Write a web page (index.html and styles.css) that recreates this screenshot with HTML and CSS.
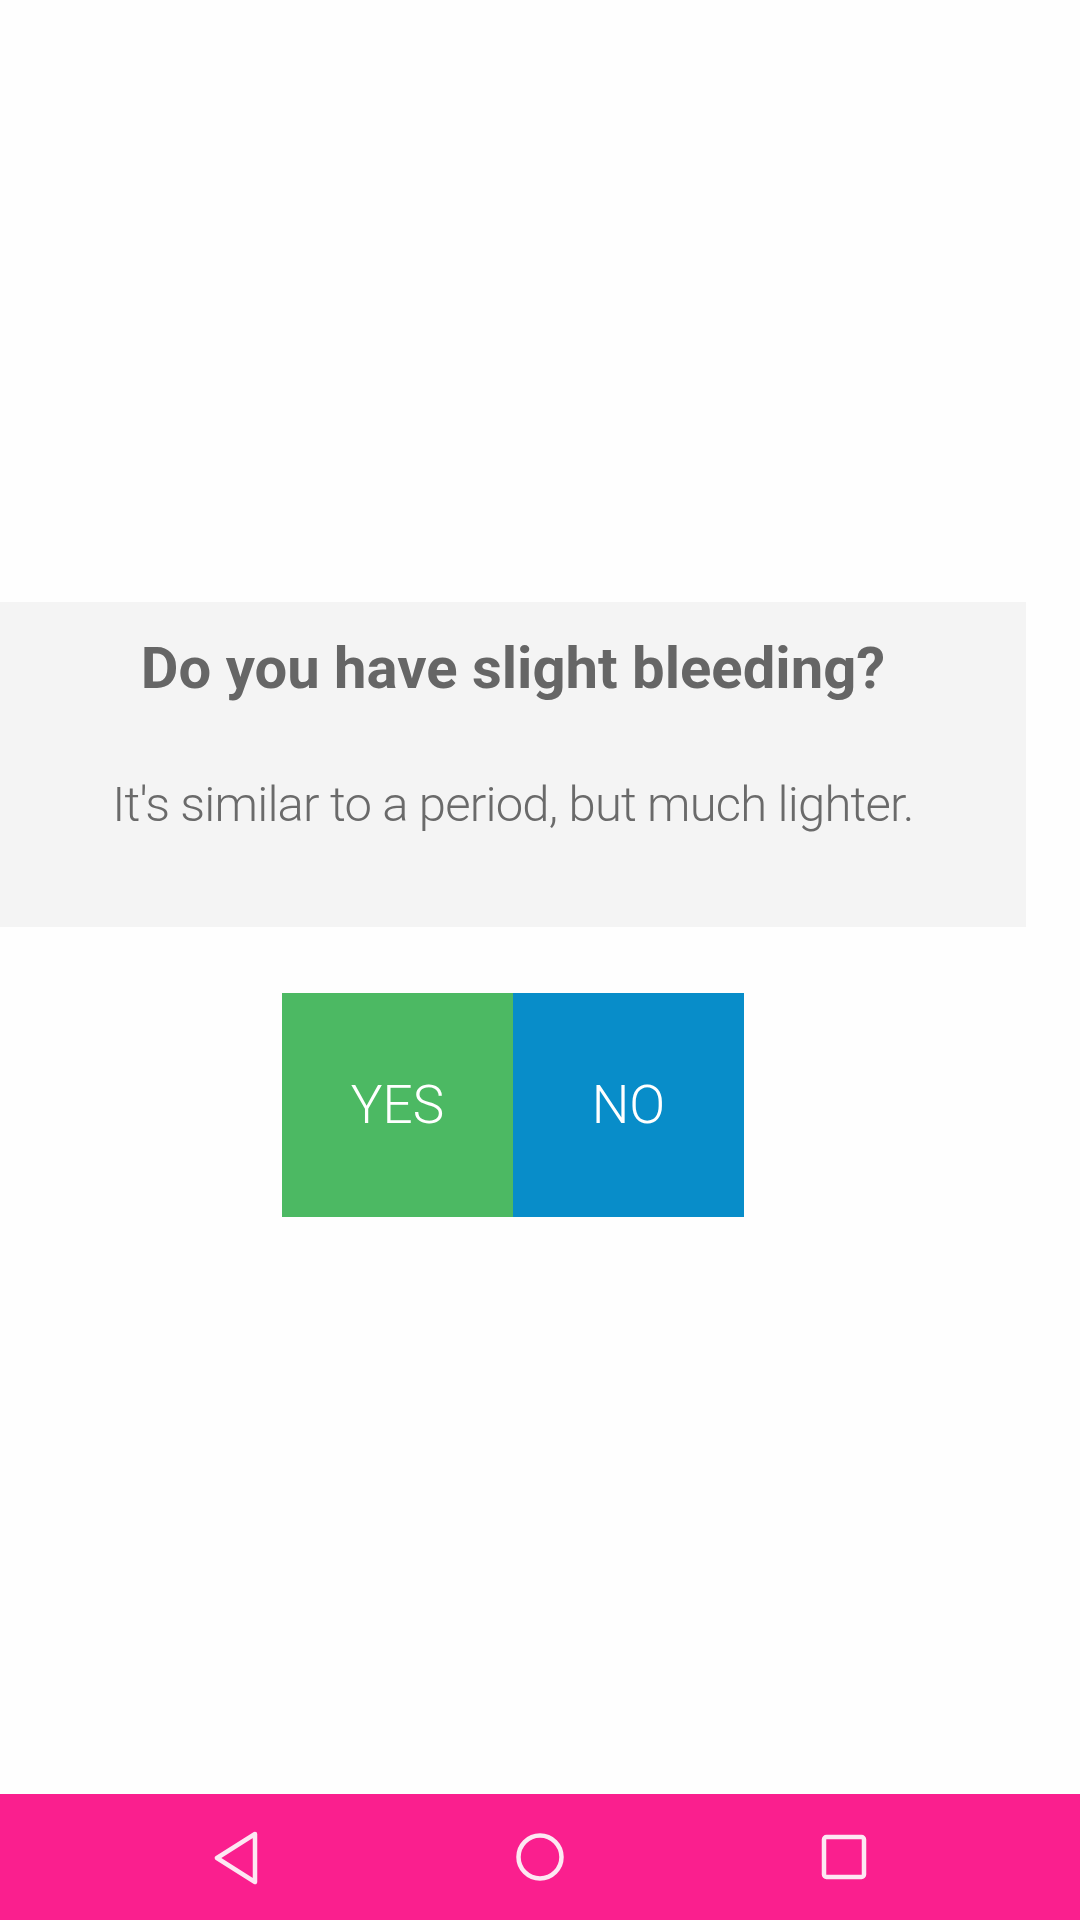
FILE: index.html
```html
<!DOCTYPE html>
<html lang="en">
<head>
<meta charset="utf-8">
<title>Slight bleeding</title>
<link rel="stylesheet" href="styles.css">
</head>
<body>
<div class="screen">
  <main class="content">
    <section class="card">
      <h1 class="title">Do you have slight bleeding?</h1>
      <p class="subtitle">It's similar to a period, but much lighter.</p>
    </section>
    <div class="answers">
      <button class="answer yes">YES</button>
      <button class="answer no">NO</button>
    </div>
  </main>
  <nav class="navbar">
    <span class="nav-item">
      <svg width="60" height="60" viewBox="0 0 60 60"><path d="M49 7 L11 31 L49 55 Z" fill="none" stroke="#fde8f3" stroke-width="4.5" stroke-linejoin="round"/></svg>
    </span>
    <span class="nav-item">
      <svg width="60" height="60" viewBox="0 0 60 60"><circle cx="30" cy="30" r="21.5" fill="none" stroke="#fde8f3" stroke-width="4.5"/></svg>
    </span>
    <span class="nav-item">
      <svg width="60" height="60" viewBox="0 0 60 60"><rect x="10" y="10" width="40" height="40" rx="2.5" fill="none" stroke="#fde8f3" stroke-width="4.5"/></svg>
    </span>
  </nav>
</div>
</body>
</html>
```
FILE: styles.css
```css
html, body {
  margin: 0;
  padding: 0;
  background: #fefefe;
}
.screen {
  width: 1080px;
  height: 1920px;
  display: flex;
  flex-direction: column;
  font-family: Roboto, "Liberation Sans", sans-serif;
}
.content {
  flex: 1;
  padding-top: 602px;
  box-sizing: border-box;
}
.card {
  width: 1026px;
  background: #f4f4f4;
  padding: 31px 0 92px;
  text-align: center;
}
.title {
  margin: 0;
  font-size: 58px;
  line-height: 70px;
  font-weight: 700;
  color: #666666;
}
.subtitle {
  margin: 72px 0 0;
  font-size: 49px;
  line-height: 60px;
  font-weight: 300;
  letter-spacing: -0.8px;
  color: #6a6a6a;
}
.answers {
  display: flex;
  margin: 66px 0 0 282px;
}
.answer {
  width: 231px;
  height: 224px;
  border: 0;
  padding: 0;
  margin: 0;
  font-family: Roboto, "Liberation Sans", sans-serif;
  font-size: 53px;
  font-weight: 300;
  color: #ffffff;
}
.yes { background: #4cb963; }
.no { background: #088dc9; }
.navbar {
  height: 126px;
  background: #fa1f8e;
  display: grid;
  grid-template-columns: repeat(3, 304px);
  justify-content: center;
  align-items: center;
}
.nav-item {
  display: flex;
  justify-content: center;
  align-items: center;
}
.nav-item svg { display: block; }
```
